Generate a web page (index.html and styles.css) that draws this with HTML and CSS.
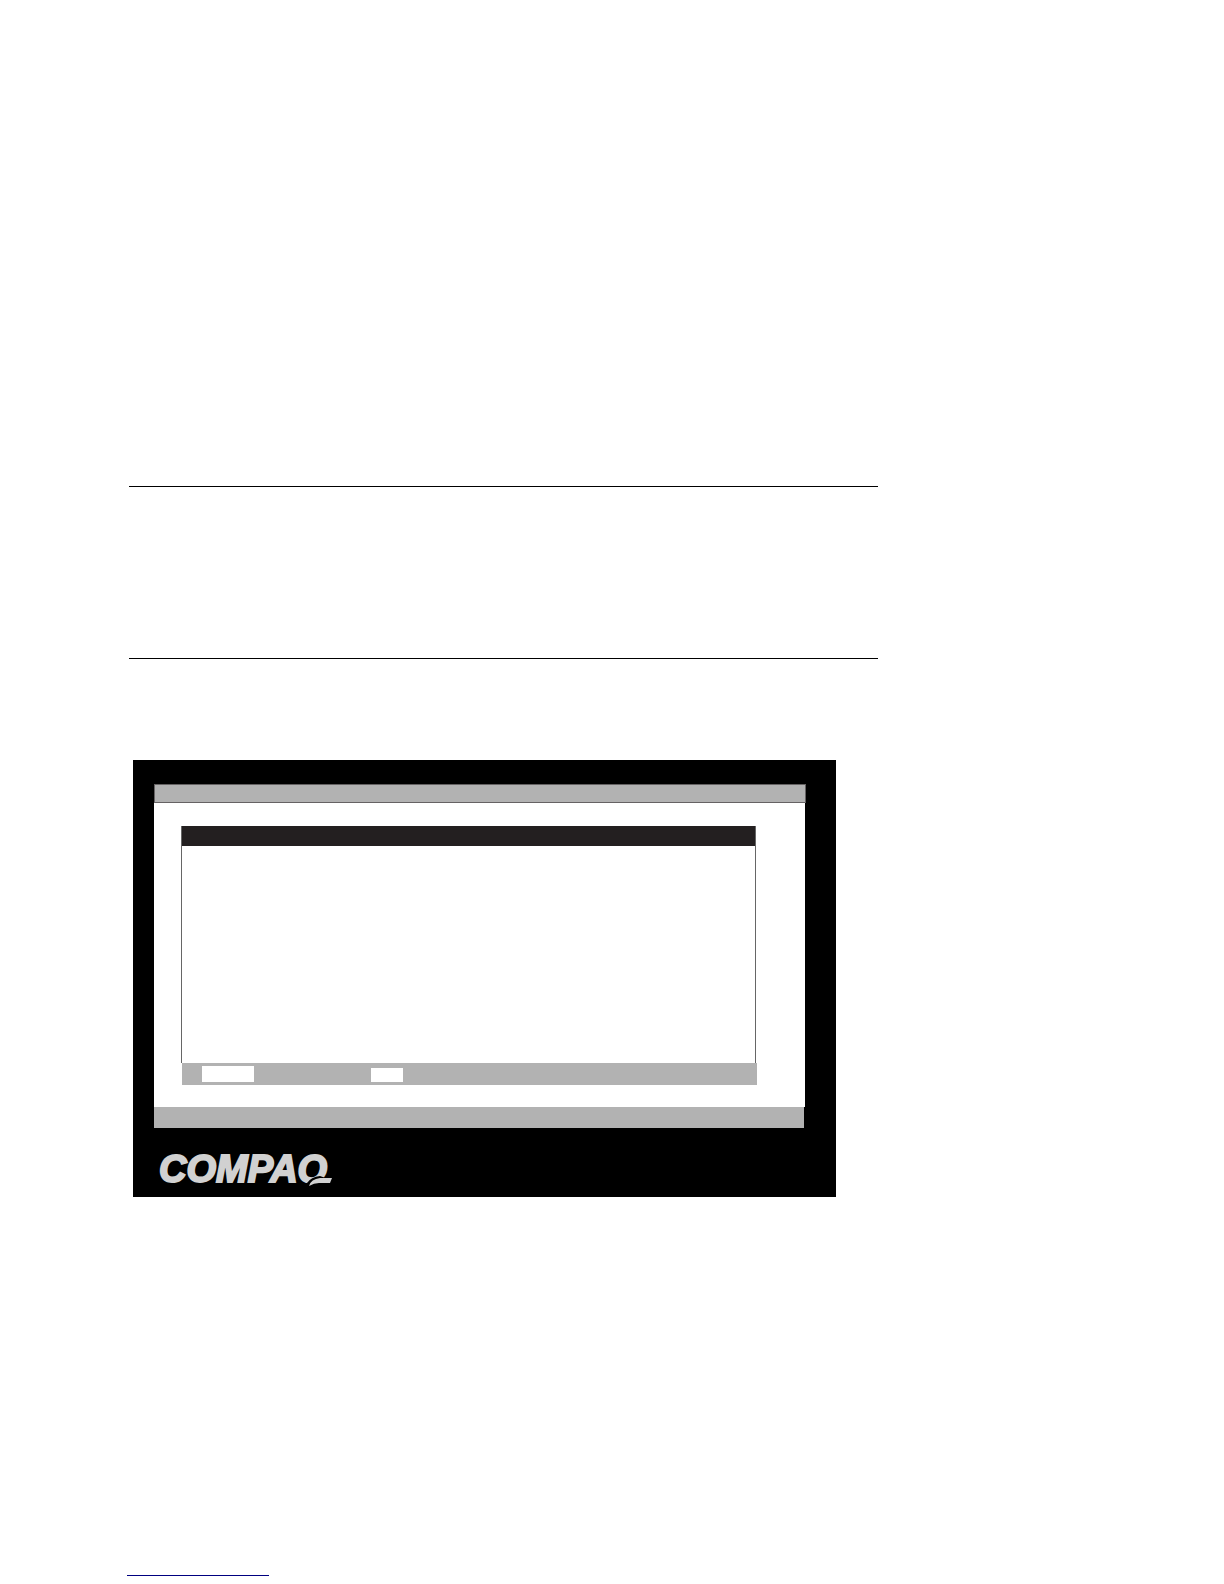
FILE: index.html
```html
<!DOCTYPE html>
<html lang="en">
<head>
<meta charset="utf-8">
<meta name="viewport" content="width=device-width, initial-scale=1">
<title>Compaq</title>
<link rel="stylesheet" href="styles.css">
</head>
<body>
<main class="page">
  <section class="note"></section>
  <figure class="monitor">
    <div class="screen">
      <div class="title-bar"></div>
      <div class="desktop">
        <div class="window">
          <div class="window-title"></div>
          <div class="window-body"></div>
        </div>
        <div class="key-bar">
          <span class="key key-wide"></span>
          <span class="key key-small"></span>
        </div>
      </div>
      <div class="status-bar"></div>
    </div>
    <svg class="logo" width="200" height="48" viewBox="0 0 200 48" role="img" aria-label="Compaq">
      <text class="logo-text" x="5" y="37">COMPAQ</text>
      <path class="logo-gap" d="M148 38L153 38Q157 32 166 31L177 35L177 48L148 48Z"/>
      <path class="logo-tail" d="M155 41Q157 34 166 33L178 33L176 38L165 38Q160 38 155 41Z"/>
    </svg>
  </figure>
  <a class="footer-link" href="#" aria-label="Home"></a>
</main>
</body>
</html>
```
FILE: styles.css
```css
* {
  box-sizing: border-box;
}

body {
  margin: 0;
  background: #fff;
  font-family: "Liberation Sans", sans-serif;
}

.page {
  display: flex;
  flex-direction: column;
  padding: 486px 127px 8px;
}

.note {
  width: 100%;
  max-width: 749px;
  height: 173px;
  margin-left: 2px;
  border: solid #000;
  border-width: 1px 0;
}

.monitor {
  width: 100%;
  max-width: 703px;
  margin: 101px 0 0 6px;
  padding: 24px 30px 4px 21px;
  background: #000;
}

.title-bar {
  height: 19px;
  border: 1px solid #656263;
  background: #b2b2b2;
}

.desktop {
  margin-right: 1px;
  padding: 23px 48px 22px 27px;
  background: #fff;
}

.window {
  margin-right: 1px;
  border: solid #666;
  border-width: 0 1px;
}

.window-title {
  height: 20px;
  background: #231f20;
}

.window-body {
  height: 217px;
}

.key-bar {
  display: flex;
  align-items: flex-end;
  gap: 117px;
  height: 22px;
  margin-left: 1px;
  padding: 3px 20px;
  background: #b2b2b2;
}

.key {
  background: #fff;
}

.key-wide {
  width: 52px;
  height: 16px;
}

.key-small {
  width: 32px;
  height: 14px;
}

.status-bar {
  height: 21px;
  margin-right: 2px;
  background: #b2b2b2;
}

.logo {
  display: block;
  margin-top: 17px;
}

.logo-text {
  fill: #d1d1d1;
  stroke: #d1d1d1;
  stroke-width: 2px;
  font-size: 38px;
  font-style: italic;
  font-weight: 700;
}

.logo-gap {
  fill: #000;
}

.logo-tail {
  fill: #d1d1d1;
}

.footer-link {
  width: 142px;
  height: 379px;
  border-bottom: 1px solid #000080;
}
```
